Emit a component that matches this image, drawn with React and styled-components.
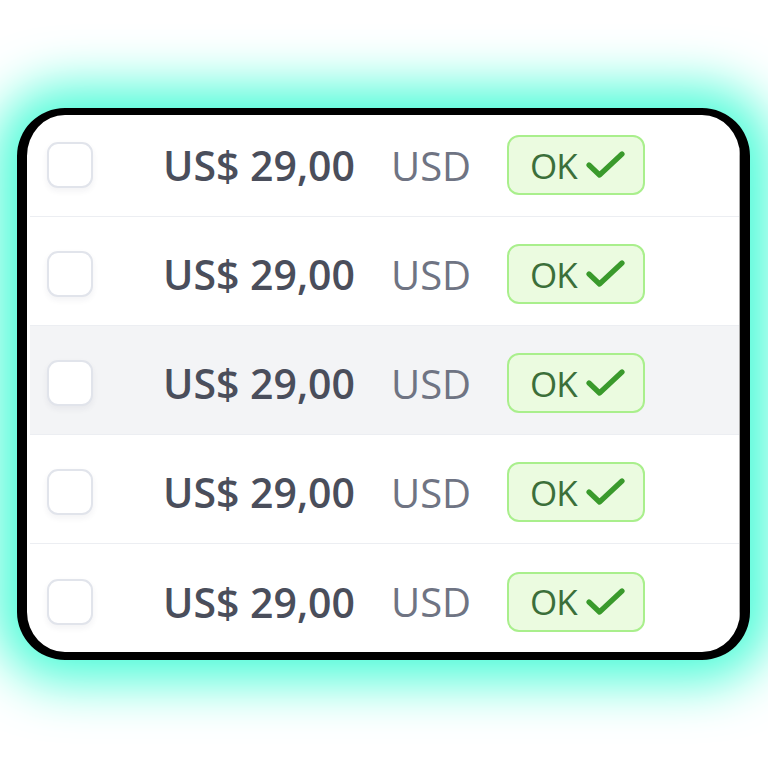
import React from "react";
import styled, { createGlobalStyle } from "styled-components";

const GlobalStyle = createGlobalStyle`
  body {
    margin: 0;
    background: #ffffff;
    font-family: "Open Sans", "Liberation Sans", sans-serif;
  }
`;

const rows = [
  { id: 1, amount: "US$ 29,00", currency: "USD" },
  { id: 2, amount: "US$ 29,00", currency: "USD" },
  { id: 3, amount: "US$ 29,00", currency: "USD", hover: true },
  { id: 4, amount: "US$ 29,00", currency: "USD" },
  { id: 5, amount: "US$ 29,00", currency: "USD" },
];

const CheckIcon = () => (
  <svg width="39" height="28" viewBox="0 0 39 28" fill="none">
    <path
      d="M3 14 L13.5 24 L36 3"
      stroke="#3a9a2c"
      strokeWidth="5.2"
      strokeLinecap="round"
      strokeLinejoin="round"
    />
  </svg>
);

const App = () => {
  return (
    <>
      <GlobalStyle />
      <Page>
        <Card>
          <List>
            {rows.map((row) => (
              <Row key={row.id} $hover={row.hover}>
                <Checkbox />
                <Amount>{row.amount}</Amount>
                <Currency>{row.currency}</Currency>
                <Badge>
                  <BadgeText>OK</BadgeText>
                  <CheckIcon />
                </Badge>
              </Row>
            ))}
          </List>
        </Card>
      </Page>
    </>
  );
};

const Page = styled.div`
  display: flex;
  padding: 108px 0 0 17px;
  height: 660px;
`;

const Card = styled.div`
  width: 733px;
  height: 552px;
  box-sizing: border-box;
  border-style: solid;
  border-color: #000;
  border-width: 7px 10px 8px 10px;
  border-radius: 48px;
  background: #fff;
  box-shadow: 0 0 52px 22px #4dfcd8;
  overflow: hidden;
`;

// the table is scrolled a little: the first row starts under the frame
const List = styled.div`
  display: flex;
  flex-direction: column;
  margin-top: -7px;
  padding-left: 3px;
  border-right: 1px solid #a8a8a8;
`;

const Row = styled.div`
  display: flex;
  align-items: center;
  flex: 0 0 109px;
  box-sizing: border-box;
  padding-top: 6px;
  border-bottom: 1px solid #eceef2;
  background: ${({ $hover }) => ($hover ? "#f3f4f6" : "transparent")};

  &:last-child {
    border-bottom: none;
  }
`;

const Checkbox = styled.span`
  width: 46px;
  height: 46px;
  box-sizing: border-box;
  margin-left: 17px;
  border: 2px solid #e1e4eb;
  border-radius: 11px;
  background: #fff;
  box-shadow: 0 3px 6px rgba(30, 40, 70, 0.06);
`;

const Amount = styled.span`
  margin-left: 70px;
  width: 228px;
  font-size: 41px;
  font-weight: 600;
  color: #4a4e5b;
`;

const Currency = styled.span`
  width: 116px;
  font-size: 40px;
  font-weight: 400;
  color: #6f7483;
`;

const Badge = styled.span`
  display: flex;
  align-items: center;
  gap: 9px;
  height: 60px;
  box-sizing: border-box;
  padding: 0 18px 0 21px;
  border: 2px solid #a9ef8c;
  border-radius: 12px;
  background: #ebfbe0;
`;

const BadgeText = styled.span`
  font-size: 35px;
  font-weight: 400;
  color: #3b6f3a;
  letter-spacing: -1px;
`;

export default App;
